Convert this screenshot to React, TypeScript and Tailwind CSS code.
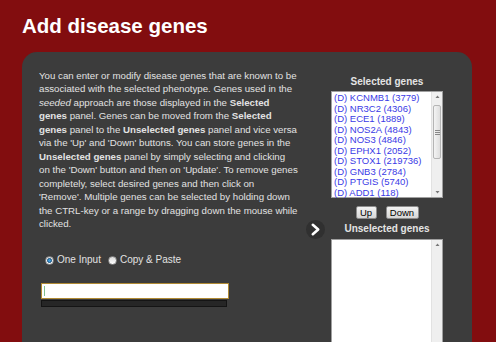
import React from 'react';

const selectedGenes = [
  '(D) KCNMB1 (3779)',
  '(D) NR3C2 (4306)',
  '(D) ECE1 (1889)',
  '(D) NOS2A (4843)',
  '(D) NOS3 (4846)',
  '(D) EPHX1 (2052)',
  '(D) STOX1 (219736)',
  '(D) GNB3 (2784)',
  '(D) PTGIS (5740)',
  '(D) ADD1 (118)',
];

const ScrollArrow = ({ down }: { down?: boolean }) => (
  <svg width="11" height="10" viewBox="0 0 11 10" className="block">
    {down ? <path d="M3.5 4 L7.5 4 L5.5 6.5 Z" fill="#777" /> : <path d="M3.5 6 L7.5 6 L5.5 3.5 Z" fill="#777" />}
  </svg>
);

const Scrollbar = ({ thumb }: { thumb: boolean }) => (
  <div className="flex w-[11px] shrink-0 flex-col border-l border-[#e2e2e2] bg-[#efefef]">
    <ScrollArrow />
    {thumb && (
      <div className="mx-[1px] mt-[3px] flex h-[54px] items-center justify-center rounded-[2px] border border-[#b5b5b5] bg-gradient-to-r from-[#f4f4f4] to-[#dedede]">
        <div className="flex flex-col gap-[1px]">
          <div className="h-px w-[5px] bg-[#888]" />
          <div className="h-px w-[5px] bg-[#888]" />
          <div className="h-px w-[5px] bg-[#888]" />
        </div>
      </div>
    )}
    <div className="flex-1" />
    <ScrollArrow down />
  </div>
);

const Radio = ({ checked }: { checked?: boolean }) => (
  <span className="flex h-[9px] w-[9px] items-center justify-center rounded-full border border-[#8a8a8a] bg-gradient-to-b from-[#d8d8d8] to-[#ffffff]">
    {checked && <span className="h-[5px] w-[5px] rounded-full border border-[#1b4f7a] bg-[#3a9ad9]" />}
  </span>
);

export default function App() {
  return (
    <div className="h-[342px] w-[496px] overflow-hidden bg-[#820d0f] pl-[22px] font-['Liberation_Sans',Arial,sans-serif]">
      <h1 className="pt-[14px] text-[20.5px] font-bold leading-[24px] text-white">Add disease genes</h1>

      <div className="mt-[14px] flex h-[320px] w-[450px] rounded-[15px] bg-[#3c3c3c] pl-[17px]">
        <div className="w-[267px] shrink-0">
          <p className="whitespace-nowrap pt-[17px] text-[9.7px] leading-[13.45px] text-[#e2e2e2]">
            You can enter or modify disease genes that are known to be
            <br />
            associated with the selected phenotype. Genes used in the
            <br />
            <i>seeded</i> approach are those displayed in the <b>Selected</b>
            <br />
            <b>genes</b> panel. Genes can be moved from the <b>Selected</b>
            <br />
            <b>genes</b> panel to the <b>Unselected genes</b> panel and vice versa
            <br />
            via the 'Up' and 'Down' buttons. You can store genes in the
            <br />
            <b>Unselected genes</b> panel by simply selecting and clicking
            <br />
            on the 'Down' button and then on 'Update'. To remove genes
            <br />
            completely, select desired genes and then click on
            <br />
            'Remove'. Multiple genes can be selected by holding down
            <br />
            the CTRL-key or a range by dragging down the mouse while
            <br />
            clicked.
          </p>

          <div className="ml-[6px] mt-[24px] flex items-center text-[10px] leading-[12px] text-[#e2e2e2]">
            <Radio checked />
            <span className="ml-[3px]">One Input</span>
            <span className="ml-[7px]">
              <Radio />
            </span>
            <span className="ml-[3px]">Copy &amp; Paste</span>
          </div>

          <div className="ml-[2px] mt-[17px] w-[188px]">
            <div className="flex h-[16px] items-center border-[1.5px] border-[#b08a34] bg-white pl-[2px]">
              <div className="h-[10px] w-px bg-[#7fbf8f]" />
            </div>
            <div className="mt-[1px] h-[7px] w-[186px] border border-[#141414] bg-[#262626]" />
          </div>
        </div>

        <div className="ml-[0px] mr-[6px] mt-[168px] flex h-[19px] w-[19px] shrink-0 items-center justify-center rounded-full bg-[#303030]">
          <svg width="19" height="19" viewBox="0 0 19 19">
            <path d="M6.8 4.8 L12.2 9.5 L6.8 14.2" fill="none" stroke="#fff" strokeWidth="2.6" strokeLinecap="round" strokeLinejoin="round" />
          </svg>
        </div>

        <div className="flex w-[112px] shrink-0 flex-col items-center pt-[24px]">
          <div className="text-[10px] font-bold leading-[12px] text-[#e4e4e4]">Selected genes</div>
          <div className="mt-[3px] flex h-[107px] w-[112px] border border-[#a0a0a0] bg-white">
            <ul className="flex-1 pl-[2px] pt-px text-[9.5px] leading-[10.5px] text-[#3a3ae6]">
              {selectedGenes.map((g) => (
                <li key={g} className="whitespace-nowrap">
                  {g}
                </li>
              ))}
            </ul>
            <Scrollbar thumb />
          </div>

          <div className="mt-[8px] flex gap-[9px]">
            <button className="h-[13px] w-[21px] rounded-[2px] border border-[#8c8c8c] bg-gradient-to-b from-[#f2f2f2] to-[#d6d6d6] text-[9.5px] leading-[11px] text-black">
              Up
            </button>
            <button className="h-[13px] w-[33px] rounded-[2px] border border-[#8c8c8c] bg-gradient-to-b from-[#f2f2f2] to-[#d6d6d6] text-[9.5px] leading-[11px] text-black">
              Down
            </button>
          </div>

          <div className="mt-[4px] text-[10px] font-bold leading-[12px] text-[#e4e4e4]">Unselected genes</div>
          <div className="mt-[4px] flex h-[120px] w-[112px] border border-[#a0a0a0] bg-white">
            <div className="flex-1" />
            <Scrollbar thumb={false} />
          </div>
        </div>
      </div>
    </div>
  );
}
